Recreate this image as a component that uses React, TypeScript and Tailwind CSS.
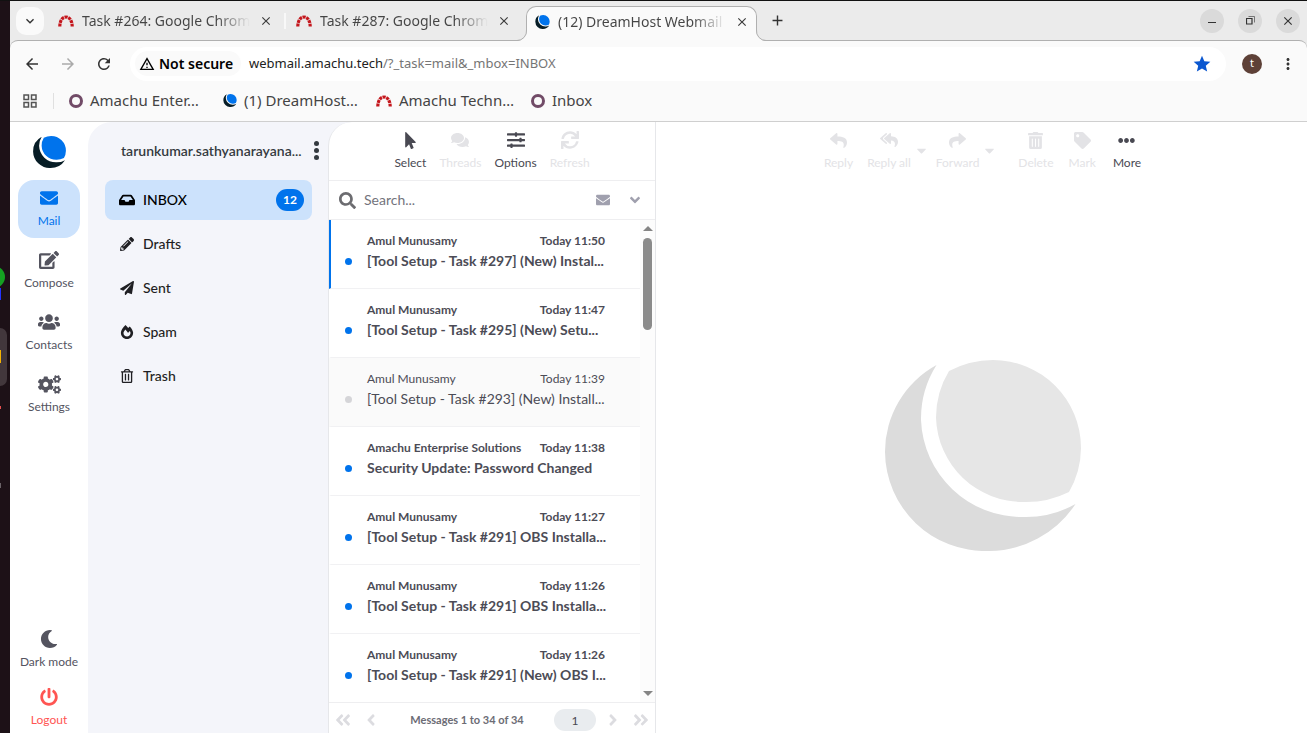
import type { ReactNode } from "react";
import type { IconType } from "react-icons";
import clsx from "clsx";
import {
  FaAngleDoubleLeft,
  FaAngleDoubleRight,
  FaAngleDown,
  FaAngleLeft,
  FaAngleRight,
  FaCaretDown,
  FaCogs,
  FaComments,
  FaEdit,
  FaEllipsisH,
  FaEnvelope,
  FaFireAlt,
  FaInbox,
  FaMoon,
  FaMousePointer,
  FaPaperPlane,
  FaPencilAlt,
  FaPowerOff,
  FaRegTrashAlt,
  FaReply,
  FaReplyAll,
  FaSearch,
  FaShare,
  FaSlidersH,
  FaSync,
  FaTag,
  FaTrashAlt,
  FaUsers,
} from "react-icons/fa";
import {
  MdArrowBack,
  MdArrowForward,
  MdClose,
  MdKeyboardArrowDown,
  MdMoreVert,
  MdOutlineGridView,
  MdOutlineWarningAmber,
  MdRefresh,
  MdStar,
  MdAdd,
} from "react-icons/md";

const tabs = ["Task #264: Google Chrom", "Task #287: Google Chrom"];

const folders: { name: string; icon: IconType; count?: number }[] = [
  { name: "INBOX", icon: FaInbox, count: 12 },
  { name: "Drafts", icon: FaPencilAlt },
  { name: "Sent", icon: FaPaperPlane },
  { name: "Spam", icon: FaFireAlt },
  { name: "Trash", icon: FaRegTrashAlt },
];

const messages = [
  { from: "Amul Munusamy", time: "Today 11:50", subject: "[Tool Setup - Task #297] (New) Instal...", selected: true },
  { from: "Amul Munusamy", time: "Today 11:47", subject: "[Tool Setup - Task #295] (New) Setu..." },
  { from: "Amul Munusamy", time: "Today 11:39", subject: "[Tool Setup - Task #293] (New) Install...", read: true },
  { from: "Amachu Enterprise Solutions", time: "Today 11:38", subject: "Security Update: Password Changed" },
  { from: "Amul Munusamy", time: "Today 11:27", subject: "[Tool Setup - Task #291] OBS Installa..." },
  { from: "Amul Munusamy", time: "Today 11:26", subject: "[Tool Setup - Task #291] OBS Installa..." },
  { from: "Amul Munusamy", time: "Today 11:26", subject: "[Tool Setup - Task #291] (New) OBS I..." },
];

function Logo({ className, dark, light }: { className: string; dark: string; light: string }) {
  return (
    <svg viewBox="0 0 196 191" className={className} aria-hidden="true">
      <path
        fill={dark}
        d="M51.5 5A101 101 0 0 0 36 60 101 101 0 0 0 138 157 101 101 0 0 0 190.5 144 104 104 0 0 1 103 191 100 100 0 0 1 0 92 99 99 0 0 1 51.5 5Z"
      />
      <path
        fill={light}
        d="M64 11A96 96 0 0 1 108 0 88 88 0 0 1 196 88 90 90 0 0 1 184 132 96 96 0 0 1 139 142 87 87 0 0 1 51 58 90 90 0 0 1 64 11Z"
      />
    </svg>
  );
}

function Redmine() {
  return (
    <svg viewBox="0 0 16 12" className="h-3 w-4 shrink-0" aria-hidden="true">
      <path d="M1.8 11.5C1.8 6.5 4 2 8 2s6.2 4.5 6.2 9.5" fill="none" stroke="#c4161c" strokeWidth="3.2" strokeDasharray="3 .7" />
    </svg>
  );
}

function Ring() {
  return <span className="size-[14px] shrink-0 rounded-full border-[3px] border-[#714b67]" />;
}

function Dock() {
  return (
    <svg className="h-full w-[10px] shrink-0 bg-[#1d1117]" aria-hidden="true">
      <circle cx="-6" cy="276" r="11" fill="#15a022" />
      <rect y="287" width="1" height="12" fill="#2233ff" />
      <rect x="-12" y="327" width="19" height="58" rx="7" fill="#42373c" />
      <rect y="349" width="1" height="13" fill="#f5b301" />
      <rect y="405" width="1" height="3" fill="#e8504f" />
      <rect y="482" width="1" height="5" fill="#6b6368" />
    </svg>
  );
}

function CloseTab() {
  return (
    <button aria-label="Close tab" className="flex size-4 shrink-0 items-center justify-center text-[#3c3c3c]">
      <MdClose size={14} />
    </button>
  );
}

function TabTitle({ children }: { children: ReactNode }) {
  return (
    <span className="w-[168px] shrink-0 bg-linear-to-r from-[#444] from-80% to-transparent bg-clip-text text-sm whitespace-nowrap text-transparent">
      {children}
    </span>
  );
}

function TabStrip() {
  return (
    <div className="flex h-[39px] items-center bg-[#ebebeb] pr-[7px] pl-[6px]">
      <button aria-label="Search tabs" className="mr-1 flex size-7 shrink-0 items-center justify-center rounded-[10px] bg-[#fafafa] text-[#333]">
        <MdKeyboardArrowDown size={16} />
      </button>
      {tabs.map((title, i) => (
        <div key={title} className="flex w-[238px] items-center pl-[10px]">
          <Redmine />
          <span className="w-2" />
          <TabTitle>{title}</TabTitle>
          <span className="w-2" />
          <CloseTab />
          {i === 0 && <span className="ml-auto h-4 w-[2px] bg-[#f8f8f8]" />}
        </div>
      ))}
      <div className="relative ml-[2px] flex h-[34px] w-[231px] shrink-0 items-center self-end rounded-t-[10px] border border-b-0 border-[#b0b0b0] bg-[#fafafa] pb-1 pl-2">
        <svg className="absolute -bottom-px -left-[10px] h-[11px] w-[10px]" viewBox="0 0 10 11" aria-hidden="true">
          <path d="M10 0v11H0a10 10 0 0 0 9.500-11z" fill="#fafafa" />
          <path d="M0 10.500A9.500 9.500 0 0 0 9.500 0" fill="none" stroke="#b0b0b0" />
        </svg>
        <Logo className="h-[14px] w-[15px] shrink-0" dark="#071d26" light="#0073ec" />
        <span className="w-2" />
        <TabTitle>(12) DreamHost Webmail</TabTitle>
        <span className="w-2" />
        <CloseTab />
        <svg className="absolute -right-[10px] -bottom-px h-[11px] w-[10px]" viewBox="0 0 10 11" aria-hidden="true">
          <path d="M0 0v11h10A10 10 0 0 1 .5 0z" fill="#fafafa" />
          <path d="M10 10.500A9.500 9.500 0 0 1 .5 0" fill="none" stroke="#b0b0b0" />
        </svg>
        <span className="absolute inset-x-0 -bottom-px h-px bg-[#fafafa]" />
      </div>
      <button aria-label="New tab" className="ml-3 text-[#333]">
        <MdAdd size={17} />
      </button>
      <div className="ml-auto flex gap-[14px] text-[#333]">
        <button aria-label="Minimize" className="flex size-6 items-center justify-center rounded-full bg-[#dadada]">
          <span className="mt-1 h-px w-2 bg-[#333]" />
        </button>
        <button aria-label="Restore" className="flex size-6 items-center justify-center rounded-full bg-[#dadada]">
          <svg width="9" height="9" viewBox="0 0 9 9" fill="none" stroke="currentColor" aria-hidden="true">
            <path d="M.5 2.500h5.500v5.500H.5z" strokeWidth="1.200" />
            <path d="M2.500.5h6v6" opacity=".6" />
          </svg>
        </button>
        <button aria-label="Close" className="flex size-6 items-center justify-center rounded-full bg-[#dadada]">
          <MdClose size={14} />
        </button>
      </div>
    </div>
  );
}

function AddressBar() {
  return (
    <div className="flex h-[46px] items-center rounded-t-lg border-t border-[#b0b0b0] bg-[#fafafa] pr-[10px] pl-[13px]">
      <div className="flex gap-[18px] text-[#333]">
        <button aria-label="Back"><MdArrowBack size={18} /></button>
        <button aria-label="Forward" className="text-[#aaa]"><MdArrowForward size={18} /></button>
        <button aria-label="Reload"><MdRefresh size={18} /></button>
      </div>
      <div className="ml-[17px] flex h-[34px] flex-1 items-center rounded-full bg-white px-[5px]">
        <button className="flex h-[25px] w-[106px] items-center gap-1 rounded-full bg-[#fafafa] pl-1 text-[14px] font-semibold whitespace-nowrap text-black">
          <MdOutlineWarningAmber size={16} className="shrink-0" />
          Not secure
        </button>
        <a href="#inbox" className="ml-2 text-[13px] text-[#757575]">
          <span className="text-[#222]">webmail.amachu.tech</span>/?_task=mail&amp;_mbox=INBOX
        </a>
        <button aria-label="Bookmark this page" className="mr-[9px] ml-auto text-[#0b57d0]">
          <MdStar size={20} />
        </button>
      </div>
      <button aria-label="Profile" className="ml-4 flex size-5 items-center justify-center rounded-full bg-[#5d4037] text-[11px] text-white">
        t
      </button>
      <button aria-label="Menu" className="ml-[17px] text-[#333]">
        <MdMoreVert size={18} />
      </button>
    </div>
  );
}

function Bookmark({ icon, children, className }: { icon: ReactNode; children: ReactNode; className?: string }) {
  return (
    <a href="#bookmark" className={clsx("flex items-center gap-[7px] whitespace-nowrap", className)}>
      {icon}
      {children}
    </a>
  );
}

function BookmarksBar() {
  return (
    <nav className="flex h-[36px] items-center border-b border-[#cfcfcf] bg-[#fafafa] pb-[6px] pl-[11px] text-[15px] text-[#444]">
      <button aria-label="Apps" className="text-[#555]">
        <MdOutlineGridView size={18} />
      </button>
      <span className="mr-[15px] ml-[14px] h-4 w-px bg-[#e0e0e0]" />
      <Bookmark icon={<Ring />} className="w-[154px]">Amachu Enter…</Bookmark>
      <Bookmark icon={<Logo className="h-[13px] w-[14px]" dark="#071d26" light="#0073ec" />} className="w-[153px]">
        (1) DreamHost…
      </Bookmark>
      <Bookmark icon={<Redmine />} className="w-[155px]">Amachu Techn…</Bookmark>
      <Bookmark icon={<Ring />}>Inbox</Bookmark>
    </nav>
  );
}

function NavItem({ icon: Icon, label, size = 20, className }: { icon: IconType; label: string; size?: number; className?: string }) {
  return (
    <button className={clsx("flex h-[58px] w-full flex-col items-center rounded-2xl pt-2 text-[12px] leading-4 whitespace-nowrap", className ?? "text-[#54545f]")}>
      <span className="mb-[5px] flex h-5 items-center">
        <Icon size={size} />
      </span>
      {label}
    </button>
  );
}

function TaskMenu() {
  return (
    <nav className="flex w-[78px] shrink-0 flex-col gap-1 px-2 pt-[14px]">
      <Logo className="mb-2 h-8 w-[33px] self-center" dark="#071d26" light="#0073ec" />
      <NavItem icon={FaEnvelope} label="Mail" size={18} className="bg-[#cce2fc] text-[#0073ec]" />
      <NavItem icon={FaEdit} label="Compose" />
      <NavItem icon={FaUsers} label="Contacts" size={22} />
      <NavItem icon={FaCogs} label="Settings" size={23} />
      <div className="mt-auto -mb-1 flex flex-col">
        <NavItem icon={FaMoon} label="Dark mode" size={18} />
        <NavItem icon={FaPowerOff} label="Logout" size={18} className="text-[#ff5552]" />
      </div>
    </nav>
  );
}

function Folders() {
  return (
    <section className="w-[240px] shrink-0 rounded-tl-3xl pr-4 pl-[17px]">
      <header className="flex h-[58px] items-center justify-between pb-[2px] pl-4 text-[14px] font-semibold text-[#343a40]">
        <span>tarunkumar.sathyanarayana...</span>
        <button aria-label="Folder actions" className="-mr-3 flex w-4 flex-col items-center gap-[2px]">
          <span className="size-[5px] rounded-full bg-current" />
          <span className="size-[5px] rounded-full bg-current" />
          <span className="size-[5px] rounded-full bg-current" />
        </button>
      </header>
      <ul className="flex flex-col gap-1 text-[14px] font-medium text-[#1f1f23]">
        {folders.map(({ name, icon: Icon, count }) => (
          <li key={name}>
            <a href="#folder" className={clsx("flex h-10 items-center rounded-lg pr-2 pb-px pl-[14px]", count && "bg-[#cce2fc] text-black")}>
              <span className="mr-2 flex w-4 justify-center">
                <Icon size={count ? 16 : 14} />
              </span>
              {name}
              {count && (
                <span className="ml-auto flex h-[22px] w-7 items-center justify-center rounded-full bg-[#0073ec] text-[12px] font-bold text-white">
                  {count}
                </span>
              )}
            </a>
          </li>
        ))}
      </ul>
    </section>
  );
}

function ToolButton({ icon: Icon, label, active, size = 18 }: { icon: IconType; label: string; active?: boolean; size?: number }) {
  return (
    <button disabled={!active} className={clsx("flex flex-col items-center text-[12px] leading-4 whitespace-nowrap", active ? "text-[#494952]" : "text-[#e3e3e6]")}>
      <span className="mb-1 flex h-[22px] items-center">
        <Icon size={size} />
      </span>
      {label}
    </button>
  );
}

function MessageList() {
  return (
    <section className="flex w-[328px] shrink-0 flex-col rounded-tl-3xl border-x border-[#e6e7ea] bg-white">
      <div className="flex h-[59px] shrink-0 items-start justify-center gap-[13px] border-b border-[#eeeef0] pt-[7px]">
        <ToolButton icon={FaMousePointer} label="Select" active size={17} />
        <ToolButton icon={FaComments} label="Threads" />
        <ToolButton icon={FaSlidersH} label="Options" active />
        <ToolButton icon={FaSync} label="Refresh" />
      </div>
      <div className="flex h-[39px] shrink-0 items-center border-b border-[#eeeef0] pr-3 pl-[10px]">
        <FaSearch size={17} className="text-[#6c6c70]" />
        <input aria-label="Search" placeholder="Search..." className="ml-2 min-w-0 flex-1 pb-[2px] text-[14px] text-[#54545f] outline-none placeholder:text-[#73737c]" />
        <button aria-label="Unread only" className="text-[#a0a0ae]"><FaEnvelope size={14} /></button>
        <button aria-label="Search options" className="ml-[17px] text-[#a0a0ae]"><FaAngleDown size={16} /></button>
      </div>
      <div className="flex min-h-0 flex-1">
        <ul className="min-w-0 flex-1 overflow-hidden text-[#4c4c56]">
          {messages.map((m, i) => (
            <li
              key={i}
              className={clsx(
                "flex h-[69px] items-center border-b border-l-2 border-b-[#f1f1f3] pr-[35px] pl-[14px]",
                m.selected ? "border-l-[#0073ec]" : "border-l-transparent",
                m.read ? "bg-[#fafafa]" : "font-bold",
              )}
            >
              <span className={clsx("mt-[14px] mr-[15px] size-[7px] shrink-0 rounded-full", m.read ? "bg-[#d5d5d8]" : "bg-[#0073ec]")} />
              <div className="min-w-0 flex-1 pb-[6px]">
                <div className="flex justify-between text-[12px] leading-5 whitespace-nowrap">
                  <span>{m.from}</span>
                  <time>{m.time}</time>
                </div>
                <p className="text-[14px] leading-5 whitespace-nowrap">{m.subject}</p>
              </div>
            </li>
          ))}
        </ul>
        <div className="flex w-[15px] flex-col items-center bg-[#fcfcfc] py-[6px]">
          <span className="border-x-[5px] border-b-[5px] border-x-transparent border-b-[#858585]" />
          <span className="mt-[7px] h-[92px] w-[9px] rounded-full bg-[#8b8b8b]" />
          <span className="mt-auto border-x-[5px] border-t-[5px] border-x-transparent border-t-[#858585]" />
        </div>
      </div>
      <footer className="flex h-[31px] shrink-0 items-center border-t border-[#eeeef0] px-[5px] pt-1 text-[#dcdce0]">
        <button aria-label="First page"><FaAngleDoubleLeft size={18} /></button>
        <button aria-label="Previous page" className="ml-[10px]"><FaAngleLeft size={18} /></button>
        <span className="flex-1 text-center text-[11px] font-bold text-[#6c6c75]">Messages 1 to 34 of 34</span>
        <input aria-label="Page" defaultValue="1" className="h-[22px] w-[42px] rounded-full bg-[#e9ecef] text-center text-[12px] text-[#494952]" />
        <button aria-label="Next page" className="ml-2"><FaAngleRight size={18} /></button>
        <button aria-label="Last page" className="ml-[10px]"><FaAngleDoubleRight size={18} /></button>
      </footer>
    </section>
  );
}

function Preview() {
  return (
    <main className="flex min-w-0 flex-1 flex-col bg-white pl-[2px]">
      <div className="flex h-[59px] items-start justify-center pt-[7px]">
        <ToolButton icon={FaReply} label="Reply" size={17} />
        <span className="w-[14px]" />
        <ToolButton icon={FaReplyAll} label="Reply all" />
        <FaCaretDown size={15} className="mt-[14px] ml-[3px] text-[#e3e3e6]" />
        <span className="w-[7px]" />
        <ToolButton icon={FaShare} label="Forward" size={17} />
        <FaCaretDown size={15} className="mt-[14px] ml-[3px] text-[#e3e3e6]" />
        <span className="w-[21px]" />
        <ToolButton icon={FaTrashAlt} label="Delete" size={17} />
        <span className="w-[15px]" />
        <ToolButton icon={FaTag} label="Mark" size={17} />
        <span className="w-[17px]" />
        <ToolButton icon={FaEllipsisH} label="More" active size={17} />
      </div>
      <div className="flex flex-1 items-center justify-center pb-1">
        <Logo className="w-[196px]" dark="#dcdcdc" light="#e6e6e6" />
      </div>
    </main>
  );
}

export default function App() {
  return (
    <div className="flex h-screen flex-col overflow-hidden border-t border-[#111] bg-[#1d1117]">
      <div className="flex min-h-0 flex-1">
        <Dock />
        <div className="flex min-w-0 flex-1 flex-col bg-[#ebebeb] font-['Noto_Sans',sans-serif]">
          <TabStrip />
          <AddressBar />
          <BookmarksBar />
          <div className="flex min-h-0 flex-1 bg-white font-[Lato,sans-serif]">
            <TaskMenu />
            <div className="flex min-w-0 flex-1 rounded-tl-3xl bg-[#f4f5fa]">
              <Folders />
              <MessageList />
              <Preview />
            </div>
          </div>
        </div>
      </div>
    </div>
  );
}
